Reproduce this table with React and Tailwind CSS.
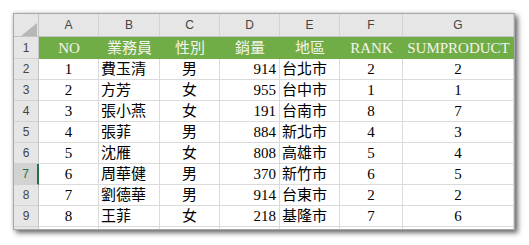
import React from "react";

const cols = ["A", "B", "C", "D", "E", "F", "G"];
const head = ["NO", "業務員", "性別", "銷量", "地區", "RANK", "SUMPRODUCT"];
const data = [
  [1, "費玉清", "男", 914, "台北市", 2, 2],
  [2, "方芳", "女", 955, "台中市", 1, 1],
  [3, "張小燕", "女", 191, "台南市", 8, 7],
  [4, "張菲", "男", 884, "新北市", 4, 3],
  [5, "沈雁", "女", 808, "高雄市", 5, 4],
  [6, "周華健", "男", 370, "新竹市", 6, 5],
  [7, "劉德華", "男", 914, "台東市", 2, 2],
  [8, "王菲", "女", 218, "基隆市", 7, 6],
];
const align = [
  "justify-center",
  "justify-start pl-[2px]",
  "justify-center",
  "justify-end pr-[3px]",
  "justify-start pl-[2px]",
  "justify-center",
  "justify-center",
];

const serif = "font-['Liberation_Serif','Noto_Sans_CJK_TC',serif]";
const sans = "font-['Liberation_Sans',Arial,sans-serif]";

export default function App() {
  return (
    <div className="w-[529px] h-[245px] bg-white overflow-hidden">
      <div className="ml-[13px] mt-[13px] w-[502px] h-[217px] border border-[#a8a8a8] bg-white overflow-hidden shadow-[3px_3px_5px_rgba(0,0,0,0.55),0_0_4px_rgba(0,0,0,0.18)]">
        <div className="grid grid-cols-[25px_60px_61px_60px_60px_60px_63px_111px] grid-rows-[23px_22px_repeat(8,21px)_8px]">
          {/* corner */}
          <div className="relative bg-[#e6e6e6] border-r border-b border-[#c4c4c4]">
            <svg className="absolute left-[7px] top-[9px]" width="16" height="13" viewBox="0 0 16 13">
              <polygon points="16,0 16,13 0,13" fill="#b7b7b7" />
            </svg>
          </div>
          {cols.map((c) => (
            <div
              key={c}
              className={`flex items-center justify-center bg-[#e6e6e6] border-r border-b border-r-[#d2d2d2] border-b-[#c4c4c4] text-[12px] text-[#444] ${sans}`}
            >
              {c}
            </div>
          ))}
          {/* row 1 */}
          <div className={`flex items-center justify-center bg-[#e6e6e6] border-r border-b border-r-[#c4c4c4] border-b-[#d2d2d2] text-[12px] text-[#444] ${sans}`}>
            1
          </div>
          {head.map((h) => (
            <div
              key={h}
              className={`flex items-center justify-center bg-[#70ad47] text-[15px] text-[#f4f4ec] ${serif}`}
            >
              {h}
            </div>
          ))}
          {data.map((row, i) => {
            const sel = i === 5;
            return (
              <React.Fragment key={i}>
                <div
                  className={`flex items-center justify-center border-b border-b-[#d2d2d2] text-[12px] ${sans} ${
                    sel
                      ? "bg-[#d2d2d2] text-[#217346] border-r-2 border-r-[#217346]"
                      : "bg-[#e6e6e6] text-[#444] border-r border-r-[#c4c4c4]"
                  }`}
                >
                  {i + 2}
                </div>
                {row.map((v, j) => (
                  <div
                    key={j}
                    className={`flex items-center ${align[j]} border-r border-b border-[#dadada] text-[15px] text-black ${serif}`}
                  >
                    {v}
                  </div>
                ))}
              </React.Fragment>
            );
          })}
          {/* partial row 10 */}
          <div className="bg-[#e6e6e6] border-r border-[#c4c4c4]" />
          {cols.map((c) => (
            <div key={c} className="border-r border-[#dadada]" />
          ))}
        </div>
      </div>
    </div>
  );
}
